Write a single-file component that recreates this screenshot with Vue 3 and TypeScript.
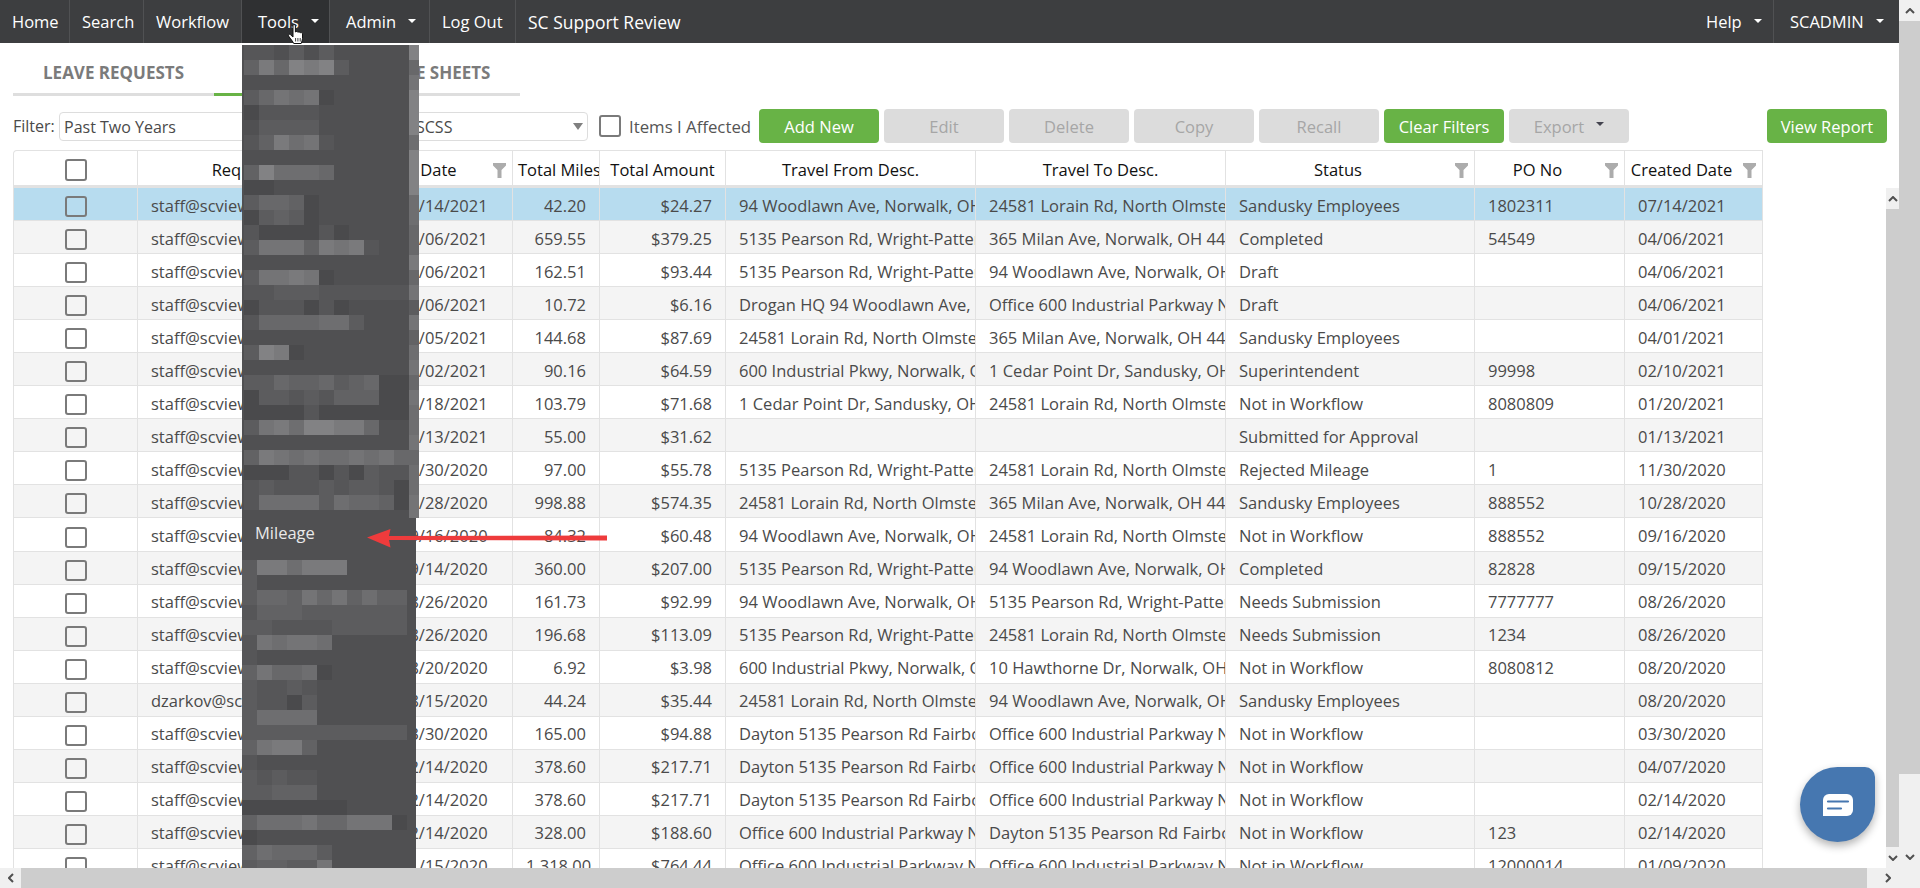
<script setup lang="ts">
interface Row {
  user: string; date: string; miles: string; amount: string; from: string; to: string;
  status: string; po: string; created: string;
}
const leftNav = [
  { label: 'Home', w: 70 }, { label: 'Search', w: 74 }, { label: 'Workflow', w: 98 },
  { label: 'Tools', w: 88, caret: true, active: true }, { label: 'Admin', w: 100, caret: true }, { label: 'Log Out', w: 86 },
]
const A = '94 Woodlawn Ave, Norwalk, OH 44857'
const B = '24581 Lorain Rd, North Olmsted, OH 44070'
const C = '5135 Pearson Rd, Wright-Patterson AFB, OH'
const D = '365 Milan Ave, Norwalk, OH 44857'
const E = '600 Industrial Pkwy, Norwalk, OH 44857'
const F = '1 Cedar Point Dr, Sandusky, OH 44870'
const G = 'Office 600 Industrial Parkway Norwalk'
const H = 'Dayton 5135 Pearson Rd Fairborn, OH'
const S = 'staff@scview.com'
const raw: string[][] = [
  [S, '07/14/2021', '42.20', '$24.27', A, B, 'Sandusky Employees', '1802311', '07/14/2021'],
  [S, '04/06/2021', '659.55', '$379.25', C, D, 'Completed', '54549', '04/06/2021'],
  [S, '04/06/2021', '162.51', '$93.44', C, A, 'Draft', '', '04/06/2021'],
  [S, '04/06/2021', '10.72', '$6.16', 'Drogan HQ 94 Woodlawn Ave, Norwalk', G, 'Draft', '', '04/06/2021'],
  [S, '04/05/2021', '144.68', '$87.69', B, D, 'Sandusky Employees', '', '04/01/2021'],
  [S, '04/02/2021', '90.16', '$64.59', E, F, 'Superintendent', '99998', '02/10/2021'],
  [S, '01/18/2021', '103.79', '$71.68', F, B, 'Not in Workflow', '8080809', '01/20/2021'],
  [S, '01/13/2021', '55.00', '$31.62', '', '', 'Submitted for Approval', '', '01/13/2021'],
  [S, '11/30/2020', '97.00', '$55.78', C, B, 'Rejected Mileage', '1', '11/30/2020'],
  [S, '10/28/2020', '998.88', '$574.35', B, D, 'Sandusky Employees', '888552', '10/28/2020'],
  [S, '09/16/2020', '84.32', '$60.48', A, B, 'Not in Workflow', '888552', '09/16/2020'],
  [S, '09/14/2020', '360.00', '$207.00', C, A, 'Completed', '82828', '09/15/2020'],
  [S, '08/26/2020', '161.73', '$92.99', A, C, 'Needs Submission', '7777777', '08/26/2020'],
  [S, '08/26/2020', '196.68', '$113.09', C, B, 'Needs Submission', '1234', '08/26/2020'],
  [S, '08/20/2020', '6.92', '$3.98', E, '10 Hawthorne Dr, Norwalk, OH 44857', 'Not in Workflow', '8080812', '08/20/2020'],
  ['dzarkov@scview.com', '08/15/2020', '44.24', '$35.44', B, A, 'Sandusky Employees', '', '08/20/2020'],
  [S, '03/30/2020', '165.00', '$94.88', H, G, 'Not in Workflow', '', '03/30/2020'],
  [S, '02/14/2020', '378.60', '$217.71', H, G, 'Not in Workflow', '', '04/07/2020'],
  [S, '02/14/2020', '378.60', '$217.71', H, G, 'Not in Workflow', '', '02/14/2020'],
  [S, '02/14/2020', '328.00', '$188.60', G, H, 'Not in Workflow', '123', '02/14/2020'],
  [S, '01/15/2020', '1,318.00', '$764.44', G, G, 'Not in Workflow', '12000014', '01/09/2020'],
]
const rows: Row[] = raw.map(r => ({
  user: r[0], date: r[1], miles: r[2], amount: r[3], from: r[4], to: r[5], status: r[6], po: r[7], created: r[8],
}))
const columns = [125, 251, 124, 87, 126, 250, 250, 249, 150, 138]
const heads = [
  { t: 'Requester', f: true }, { t: 'Date', f: true }, { t: 'Total Miles', left: true }, { t: 'Total Amount' },
  { t: 'Travel From Desc.' }, { t: 'Travel To Desc.' }, { t: 'Status', f: true }, { t: 'PO No', f: true },
  { t: 'Created Date', f: true },
]
const buttons = [
  { t: 'Add New', on: true }, { t: 'Edit' }, { t: 'Delete' }, { t: 'Copy' }, { t: 'Recall' },
  { t: 'Clear Filters', on: true }, { t: 'Export', caret: true },
]
const topMosaic = [
  '22.3.3.....', '4859893....', '...........', '357671.....', '12222......', '.3333......',
  '248672.....', '...........', '496665.....', '11.........', '35541......', '13431......', '2111121....',
  '377748782..', '...........', '377871.....', '22333222222', '1222121....', '25555663...', '...........',
  '3981.......', '...........', '33544534511', '13323244411', '11112111111', '378699885..',
  '...........', '48767667675', '11122121322', '23222323321', '26666365541',
]
const bottomMosaic = [
  '3886888....', '3..........', '35547574644', '24443333333', '33222233333', '276776.....',
  '2..........', '475561.....', '32232......', '32213......', '36666......', '33333333333',
  '47884......', '2..........', '32322......', '33444......', '1111111....', '46667557771',
  '1..........', '465553.....', '344337.....',
]
const strip = '95799969996655'.concat('857374675766756').concat('677').split('')
</script>

<template>
  <div class="page">
    <div class="upper">
      <main class="content">
        <nav class="nav">
          <a v-for="n in leftNav" :key="n.label" class="nav-item" :class="{ active: n.active, drop: n.caret }" :style="{ width: n.w + 'px' }">
            {{ n.label }}<i v-if="n.caret" class="caret"></i>
          </a>
          <span class="nav-title">SC Support Review</span>
          <a class="nav-item right">Help<i class="caret"></i></a>
          <a class="nav-item user">SCADMIN<i class="caret"></i></a>
        </nav>

        <div class="tabs">
          <div class="tab">LEAVE REQUESTS</div>
          <div class="tab current">MILEAGE</div>
          <div class="tab">TIME SHEETS</div>
        </div>

        <div class="toolbar">
          <label class="filter-label">Filter:</label>
          <div class="select first">Past Two Years<i class="sel-arrow"></i></div>
          <div class="select second">SCSS<i class="sel-arrow"></i></div>
          <span class="check tool-check"></span>
          <span class="affected">Items I Affected</span>
          <button v-for="b in buttons" :key="b.t" class="btn" :class="{ on: b.on }">
            {{ b.t }}<i v-if="b.caret" class="btn-caret"></i>
          </button>
          <button class="btn on report">View Report</button>
        </div>

        <div class="grid-wrap">
          <table class="grid">
            <colgroup><col v-for="(w, i) in columns" :key="i" :style="{ width: w + 'px' }" /></colgroup>
            <thead>
              <tr>
                <th><span class="check"></span></th>
                <th v-for="h in heads" :key="h.t" :class="{ filt: h.f, left: h.left }">
                  {{ h.t }}
                  <svg v-if="h.f" class="funnel" viewBox="0 0 13 15"><path d="M0 0h13v2.5L8.5 7v8h-4V7L0 2.5z" /></svg>
                </th>
              </tr>
            </thead>
            <tbody>
              <tr v-for="(r, i) in rows" :key="i" :class="{ sel: i === 0, alt: i % 2 === 1 }">
                <td class="c"><span class="check small"></span></td>
                <td>{{ r.user }}</td>
                <td class="date">{{ r.date }}</td>
                <td class="n">{{ r.miles }}</td>
                <td class="n">{{ r.amount }}</td>
                <td>{{ r.from }}</td>
                <td>{{ r.to }}</td>
                <td>{{ r.status }}</td>
                <td>{{ r.po }}</td>
                <td>{{ r.created }}</td>
              </tr>
            </tbody>
          </table>
        </div>

        <div class="inner-bar">
          <div class="bar-btn"><svg viewBox="0 0 10 6" class="chev"><path d="M1 5l4-4 4 4" /></svg></div>
          <div class="bar-track"></div>
          <div class="bar-btn"><svg viewBox="0 0 10 6" class="chev"><path d="M1 1l4 4 4-4" /></svg></div>
        </div>

        <div class="menu">
          <div class="mosaic top">
            <div v-for="(m, i) in topMosaic" :key="i" class="m-row">
              <span v-for="(c, j) in m.split('')" :key="j" class="cell" :class="'l' + c.replace('.', '0')"></span>
            </div>
          </div>
          <div class="menu-item">Mileage</div>
          <div class="mosaic">
            <div v-for="(m, i) in bottomMosaic" :key="i" class="m-row">
              <span v-for="(c, j) in m.split('')" :key="j" class="cell" :class="'l' + c.replace('.', '0')"></span>
            </div>
          </div>
          <div class="menu-strip">
            <span v-for="(c, i) in strip" :key="i" class="cell" :class="'l' + c"></span>
          </div>
        </div>

        <svg class="arrow" viewBox="0 0 240 20">
          <path d="M240 7.500v5L22 12l1.500 7.500L0 9.500 23.500 1 22 8z" fill="#ee3b3c" />
        </svg>

        <svg class="hand" viewBox="0 0 18 21">
          <path d="M6 1.600c0-1.300 2.400-1.300 2.400 0V8c.6-.8 2.200-.7 2.500.3.700-.7 2.100-.5 2.400.5.800-.5 2.200-.1 2.200 1v4.700c0 2-.8 3-1.300 5H6.700C6 17.700 3.500 14.800 1.600 12.100c-.9-1.300.7-2.500 1.800-1.500L6 13z" fill="#fff" stroke="#111" stroke-width="1" />
          <path d="M8.600 14v3.500M10.900 14v3.500M13.200 14v3.500" stroke="#111" stroke-width=".8" />
        </svg>

        <div class="chat">
          <svg viewBox="0 0 30 22" class="chat-icon">
            <path d="M6 0h18a6 6 0 0 1 6 6v10a6 6 0 0 1-6 6H0V6a6 6 0 0 1 6-6z" fill="#fff" />
            <path d="M5 7.500h20M5 14.500h13" stroke="#4677b0" stroke-width="2.200" stroke-linecap="round" />
          </svg>
        </div>
      </main>

      <aside class="outer-bar">
        <div class="bar-btn big"><svg viewBox="0 0 10 6" class="chev"><path d="M1 5l4-4 4 4" /></svg></div>
        <div class="bar-track"></div>
        <div class="bar-end"><svg viewBox="0 0 10 6" class="chev"><path d="M1 1l4 4 4-4" /></svg></div>
      </aside>
    </div>

    <footer class="h-bar">
      <div class="h-btn"><svg viewBox="0 0 6 10" class="chev-h"><path d="M5 1L1 5l4 4" /></svg></div>
      <div class="h-track"></div>
      <div class="h-end"><svg viewBox="0 0 6 10" class="chev-h"><path d="M1 1l4 4-4 4" /></svg></div>
    </footer>
  </div>
</template>

<style>
html, body { margin: 0; overflow: hidden; background: #fff; }
</style>

<style scoped>
.page { width: 1920px; height: 888px; display: flex; flex-direction: column; overflow: hidden;
  font-family: "Open Sans", "Liberation Sans", sans-serif; font-size: 16px; color: #4a4a4a; }
.upper { display: flex; height: 868px; }
.content { position: relative; width: 1899px; height: 868px; overflow: hidden; background: #fff; }

.nav { height: 43px; display: flex; background: #3d3e40; color: #fff; align-items: stretch; font-size: 16.500px; }
.nav-item { display: flex; align-items: center; padding-left: 12px; border-right: 1px solid #505153; box-sizing: border-box; white-space: nowrap; }
.nav-item.drop { padding-left: 16px; }
.nav-item.active { background: #2f3032; }
.nav-item.right { margin-left: auto; padding: 0 0 0 14px; width: 82px; }
.nav-item.user { border-right: 0; width: 125px; padding-left: 16px; }
.nav-title { display: flex; align-items: center; padding-left: 12px; font-size: 17.500px; }
.caret { width: 0; height: 0; border: 4px solid transparent; border-top-color: #fff; border-bottom: 0; margin: 0 0 2px 12px; }

.tabs { display: flex; width: max-content; margin: 0 0 0 13px; }
.tab { height: 42px; padding: 8px 30px 0; display: flex; align-items: center; font-weight: 700;
  font-size: 17px; color: #7b7b7b; border-bottom: 3px solid #dedede; }
.tab.current { border-bottom-color: #68b346; padding: 8px 33px 0; }

.toolbar { display: flex; align-items: center; height: 34px; margin-top: 13px; padding: 0 12px 0 13px; }
.filter-label { width: 46px; }
.select { position: relative; height: 29px; line-height: 29px; box-sizing: border-box; border: 1px solid #ddd; border-radius: 4px;
  padding: 0 0 0 4px; color: #4a4a4a; margin-right: 5px; }
.select.first { width: 261px; }
.select.second { width: 263px; padding-left: 90px; margin-right: 11px; }
.sel-arrow { position: absolute; right: 4px; top: 10px; width: 0; height: 0; border: 5.500px solid transparent; border-top: 7px solid #808080; border-bottom: 0; }
.check { display: inline-block; width: 22px; height: 22px; box-sizing: border-box; border: 2.500px solid #7a7a7a; border-radius: 3px; vertical-align: middle; }
.affected { margin: 0 9px 0 8px; white-space: nowrap; color: #555; width: 121px; font-size: 16.800px; }
.btn { width: 120px; height: 34px; margin-right: 5px; border: 0; border-radius: 4px; background: #dcdcdc; color: #a6a6a6;
  font: inherit; font-size: 16.500px; padding: 0; display: flex; align-items: center; justify-content: center; }
.btn.on { background: #68b346; color: #fff; }
.btn.report { margin: 0 0 0 auto; }
.btn-caret { width: 0; height: 0; border: 4px solid transparent; border-top-color: #44444f; border-bottom: 0; margin: 0 0 4px 12px; }

.grid-wrap { margin: 7px 0 0 13px; width: 1873px; height: 718px; overflow: hidden; }
.grid { table-layout: fixed; width: 1750px; border-collapse: separate; border-spacing: 0; font-size: 16.500px; }
.grid th { position: relative; height: 32px; padding: 2px 24px 0 0; font-weight: 400; color: #111; white-space: nowrap; background: #fff;
  border-top: 1px solid #e2e2e2; border-right: 1px solid #e2e2e2; border-bottom: 3px solid #e2e2e2; overflow: hidden; box-sizing: content-box; }
.grid th:first-child { border-left: 1px solid #e2e2e2; border-top-left-radius: 4px; padding: 2px 0 0; }
.grid th:not(.filt):not(:first-child) { padding: 2px 0 0; }
.grid th.left { text-align: left; padding: 2px 0 0 5px !important; }
.funnel { position: absolute; right: 6px; top: 12px; width: 13px; height: 15px; fill: #acacac; }
.grid td { height: 30.050px; padding: 2px 13px 0; box-sizing: content-box; white-space: nowrap; overflow: hidden;
  border-right: 1px solid #e2e2e2; border-bottom: 1px solid #e2e2e2; }
.grid td:first-child { border-left: 1px solid #e2e2e2; padding: 2px 0 0; text-align: center; }
.grid td.n { text-align: right; }
.grid td.date { padding-left: 11px; }
.grid tr.alt td { background: #f4f4f4; }
.grid tr.sel td { background: #b7dcef; }
.check.small { height: 21px; }

.inner-bar { position: absolute; right: 0; top: 188px; bottom: 0; width: 13px; display: flex; flex-direction: column; }
.bar-btn, .bar-end { height: 21px; background: #f0f0f0; display: flex; align-items: center; justify-content: center; flex: none; }
.bar-btn.big { height: 21px; }
.bar-track { flex: 1; background: #cdcdcd; }
.chev { width: 10px; height: 6px; fill: none; stroke: #505050; stroke-width: 2; }
.chev-h { width: 6px; height: 10px; fill: none; stroke: #505050; stroke-width: 2; }
.outer-bar { width: 21px; height: 868px; display: flex; flex-direction: column; }
.outer-bar .bar-track { flex: none; height: 753px; }
.bar-end { height: 94px; align-items: flex-end; padding-bottom: 8px; box-sizing: border-box; }
.h-bar { height: 20px; display: flex; }
.h-btn { width: 21px; background: #f0f0f0; display: flex; align-items: center; justify-content: center; }
.h-track { width: 1846px; background: #cdcdcd; }
.h-end { flex: 1; background: #f0f0f0; display: flex; align-items: center; padding-left: 18px; }

.menu { position: absolute; left: 242px; top: 45px; width: 174px; height: 823px; background: #505052; color: #e9e9e9; font-size: 16.500px; }
.mosaic.top { padding-left: 2px; }
.m-row { display: flex; height: 15px; }
.cell { display: block; width: 15px; height: 15px; flex: none; }
.menu-item { height: 50px; padding: 0 0 5px 13px; box-sizing: border-box; display: flex; align-items: center; }
.menu-strip { position: absolute; left: 167px; top: 0; width: 10px; height: 473px; overflow: hidden; }
.menu-strip .cell { width: 10px; }
.l0 { background: #505052; }
.l1 { background: #4a4a4c; }
.l2 { background: #565658; }
.l3 { background: #5c5c5e; }
.l4 { background: #626264; }
.l5 { background: #68686a; }
.l6 { background: #6e6e70; }
.l7 { background: #747476; }
.l8 { background: #7a7a7c; }
.l9 { background: #828284; }

.arrow { position: absolute; left: 367px; top: 528px; width: 240px; height: 20px; }
.hand { position: absolute; left: 287px; top: 24px; width: 18px; height: 21px; }
.chat { position: absolute; left: 1800px; top: 767px; width: 75px; height: 75px; background: #4677b0; display: flex; align-items: center; justify-content: center;
  border-radius: 50% 10px 50% 50%; box-shadow: 0 4px 8px rgba(0, 0, 0, .3); }
.chat-icon { width: 30px; height: 22px; }
</style>
